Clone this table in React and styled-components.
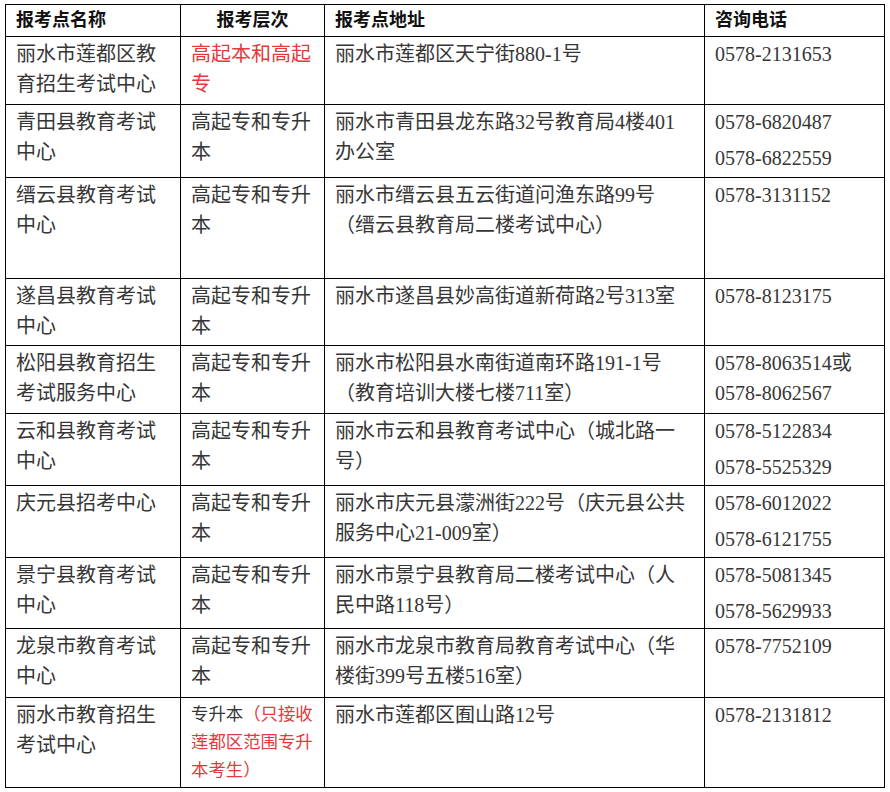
import React from 'react'
import styled, { createGlobalStyle } from 'styled-components'

const GlobalStyle = createGlobalStyle`
    body {
        margin: 0;
        background: #fff;
        font-family: "Liberation Serif", "Noto Sans CJK SC", serif;
    }
`;

const Table = styled.table`
    margin: 4px 0 0 5px;
    width: 879px;
    table-layout: fixed;
    border-collapse: collapse;
    color: #363636;
    font-size: 20px;
`;

const HeadCell = styled.th`
    height: 32px;
    padding: 2px 10px 0 10px;
    border: 1px solid #000;
    vertical-align: top;
    text-align: ${props => (props.$center ? 'center' : 'left')};
    font-size: 18px;
    line-height: 26px;
    font-weight: 700;
    color: #111;
    box-sizing: border-box;
`;

const Row = styled.tr`
    height: ${props => props.$h}px;
`;

const Cell = styled.td`
    padding: 2px ${props => props.$padRight || 10}px 0 10px;
    border: 1px solid #000;
    vertical-align: top;
    line-height: 30px;
`;

const Red = styled.span`
    color: #e5393b;
`;

const SmallLevel = styled.div`
    font-size: 17.4px;
    line-height: 28px;
`;

const Phone = styled.div`
    & + & {
        margin-top: 6px;
    }
`;

const rows = [
    { h: 68, name: '丽水市莲都区教育招生考试中心', level: 'red', addr: '丽水市莲都区天宁街880-1号', phones: ['0578-2131653'] },
    { h: 73, name: '青田县教育考试中心', addr: '丽水市青田县龙东路32号教育局4楼401办公室', phones: ['0578-6820487', '0578-6822559'] },
    { h: 101, name: '缙云县教育考试中心', addr: '丽水市缙云县五云街道问渔东路99号（缙云县教育局二楼考试中心）', phones: ['0578-3131152'] },
    { h: 67, name: '遂昌县教育考试中心', addr: '丽水市遂昌县妙高街道新荷路2号313室', phones: ['0578-8123175'] },
    { h: 68, name: '松阳县教育招生考试服务中心', addr: '丽水市松阳县水南街道南环路191-1号（教育培训大楼七楼711室）', phones: ['0578-8063514或0578-8062567'] },
    { h: 72, name: '云和县教育考试中心', addr: '丽水市云和县教育考试中心（城北路一号）', phones: ['0578-5122834', '0578-5525329'] },
    { h: 72, name: '庆元县招考中心', addr: '丽水市庆元县濛洲街222号（庆元县公共服务中心21-009室）', phones: ['0578-6012022', '0578-6121755'] },
    { h: 71, name: '景宁县教育考试中心', addr: '丽水市景宁县教育局二楼考试中心（人民中路118号）', phones: ['0578-5081345', '0578-5629933'] },
    { h: 69, name: '龙泉市教育考试中心', addr: '丽水市龙泉市教育局教育考试中心（华楼街399号五楼516室）', phones: ['0578-7752109'] },
    { h: 90, name: '丽水市教育招生考试中心', level: 'local', addr: '丽水市莲都区囿山路12号', phones: ['0578-2131812'] },
]

const Level = ({ kind }) => {
    if (kind === 'red') return <Red>高起本和高起专</Red>
    if (kind === 'local') {
        return (
            <SmallLevel>
                专升本<Red>（只接收莲都区范围专升本考生）</Red>
            </SmallLevel>
        )
    }
    return '高起专和专升本'
}

const App = () => {
    return (
        <>
            <GlobalStyle />
            <Table>
                <colgroup>
                    <col style={{ width: 175 }} />
                    <col style={{ width: 144 }} />
                    <col style={{ width: 380 }} />
                    <col style={{ width: 180 }} />
                </colgroup>
                <thead>
                    <tr>
                        <HeadCell>报考点名称</HeadCell>
                        <HeadCell $center>报考层次</HeadCell>
                        <HeadCell>报考点地址</HeadCell>
                        <HeadCell>咨询电话</HeadCell>
                    </tr>
                </thead>
                <tbody>
                    {rows.map(row => (
                        <Row key={row.name} $h={row.h}>
                            <Cell>{row.name}</Cell>
                            <Cell><Level kind={row.level} /></Cell>
                            <Cell $padRight={14}>{row.addr}</Cell>
                            <Cell>
                                {row.phones.map(p => <Phone key={p}>{p}</Phone>)}
                            </Cell>
                        </Row>
                    ))}
                </tbody>
            </Table>
        </>
    )
}

export default App
